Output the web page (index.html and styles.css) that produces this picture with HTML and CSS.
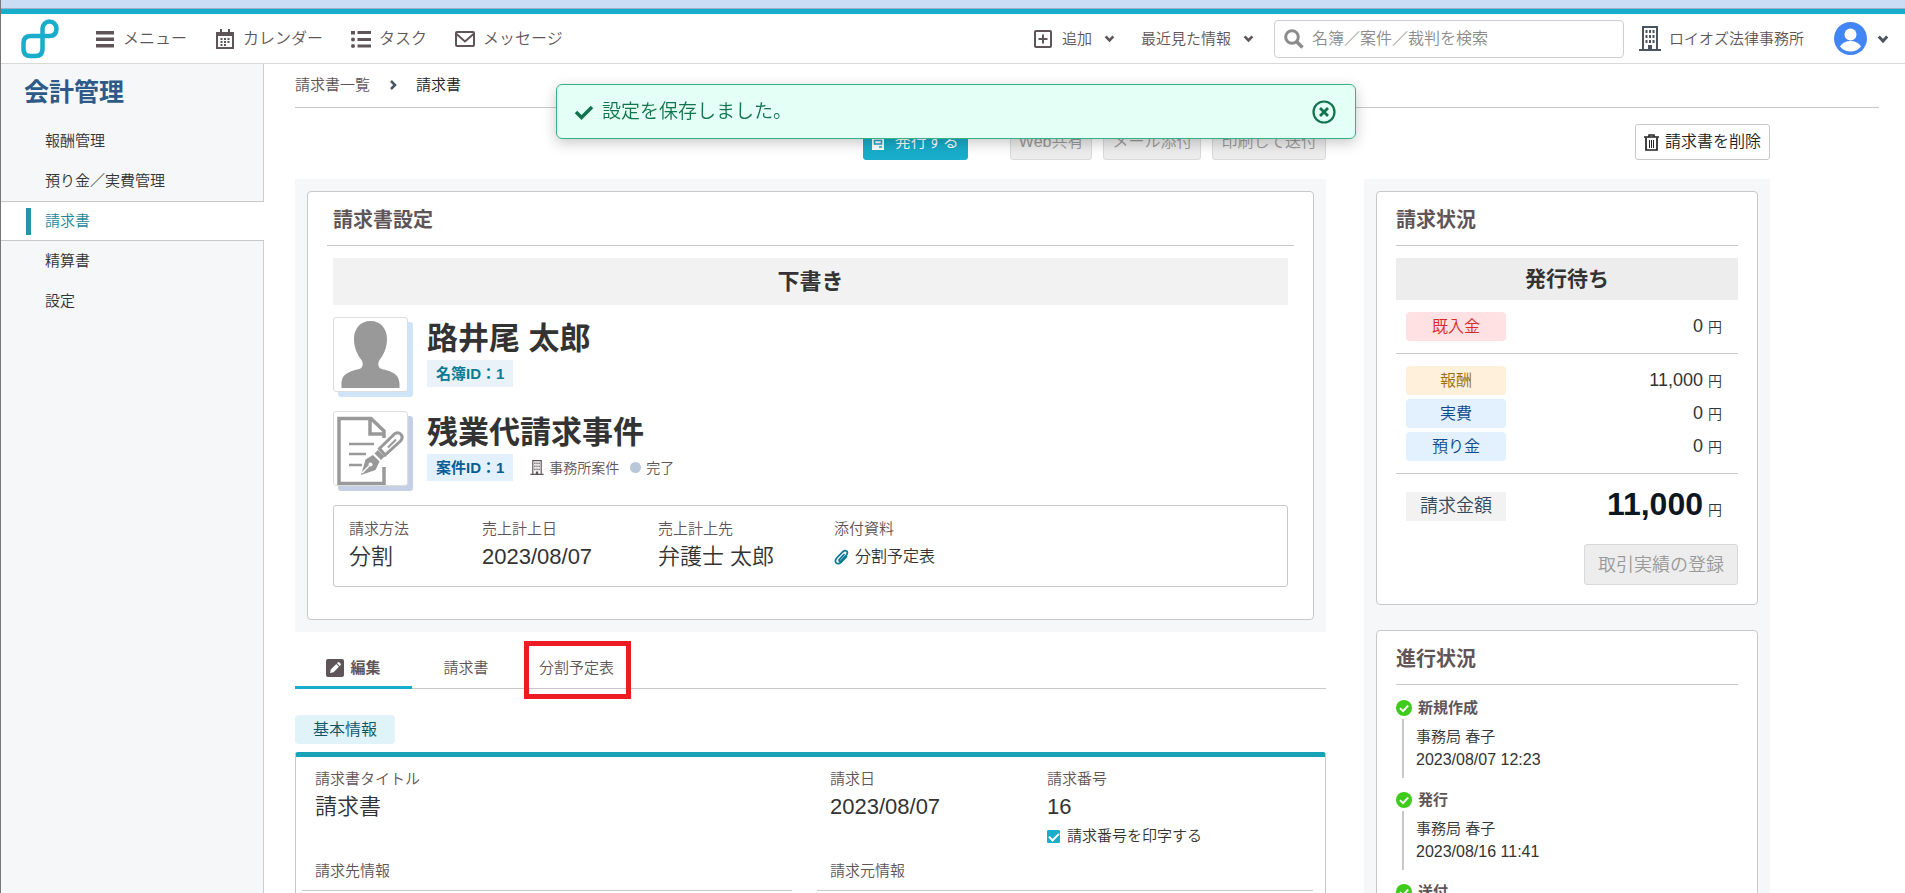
FILE: index.html
```html
<!DOCTYPE html>
<html lang="ja">
<head>
    <meta charset="UTF-8">
    <meta name="viewport" content="width=device-width, initial-scale=1.0">
    <title>請求書 | 会計管理</title>
    <link rel="stylesheet" href="styles.css">
</head>
<body>
    <!-- shared icons -->
    <svg class="defs" width="0" height="0">
        <symbol id="chevron" viewBox="0 0 10 8"><path d="M1.5 2l3.500 3.700 3.500-3.700" fill="none" stroke="currentColor" stroke-width="2.400"/></symbol>
        <symbol id="building" viewBox="0 0 22 25">
            <path d="M3 0h16v23h3v2H0v-2h3zM5 2v21h4v-4h4v4h4V2z" fill="currentColor" fill-rule="evenodd"/>
            <path d="M6.500 4h2v3h-2zM10 4h2v3h-2zM13.500 4h2v3h-2zM6.500 9h2v3h-2zM10 9h2v3h-2zM13.500 9h2v3h-2zM6.500 14h2v3h-2zM10 14h2v3h-2zM13.500 14h2v3h-2z" fill="currentColor"/>
        </symbol>
        <symbol id="done" viewBox="0 0 16 16"><circle cx="8" cy="8" r="8" fill="#3ecb1b"/><path d="M4 8.200l3 3 5.200-5.700" fill="none" stroke="#fff" stroke-width="1.900"/></symbol>
    </svg>

    <div class="page">
        <div class="strip"></div>
        <header class="header">
            <a class="logo" href="#" aria-label="ホーム">
                <svg width="38" height="40" viewBox="0 0 38 40"><path d="M21.500 30V9.500a7 7 0 0 1 14 0Q35.500 17 28 17H10Q2.500 17 2.500 24v6.500Q2.500 37 9.500 37h5Q21.500 37 21.500 30z" fill="none" stroke="#18adca" stroke-width="4.500"/></svg>
            </a>
            <nav class="main-nav">
                <a href="#"><svg width="20" height="20" viewBox="0 0 20 20"><path d="M1 2h18v3.500H1zM1 8.500h18V12H1zM1 15h18v3.500H1z" fill="currentColor"/></svg>メニュー</a>
                <a href="#"><svg width="20" height="20" viewBox="0 0 20 20"><path d="M2 4h16v15H2z" fill="none" stroke="currentColor" stroke-width="2"/><path d="M2 3h16v4H2zM5 0h2v4H5zM13 0h2v4h-2zM5.500 9h2v2h-2zM9 9h2v2H9zM12.500 9h2v2h-2zM5.500 12h2v2h-2zM9 12h2v2H9zM12.500 12h2v2h-2zM5.500 15h2v2h-2zM9 15h2v2H9z" fill="currentColor"/></svg>カレンダー</a>
                <a href="#"><svg width="20" height="20" viewBox="0 0 20 20"><path d="M0 2h4v3.500H0zM6.500 2H20v3H6.500zM6.500 9H20v3H6.500zM6.500 15.500H20v3H6.500z" fill="currentColor"/><circle cx="2" cy="10.500" r="2" fill="currentColor"/><circle cx="2" cy="17" r="2" fill="currentColor"/></svg>タスク</a>
                <a href="#"><svg width="20" height="20" viewBox="0 0 20 20"><rect x="1" y="3" width="18" height="14" rx="1" fill="none" stroke="currentColor" stroke-width="2"/><path d="M1.500 5l8.500 7.500L18.500 5" fill="none" stroke="currentColor" stroke-width="2"/></svg>メッセージ</a>
            </nav>
            <div class="tools">
                <button class="tool" type="button"><svg width="18" height="18" viewBox="0 0 18 18"><rect x="1" y="1" width="16" height="16" rx="1" fill="none" stroke="currentColor" stroke-width="2"/><path d="M9 4.500v9M4.500 9h9" stroke="currentColor" stroke-width="2"/></svg>追加<svg class="caret" width="11" height="9"><use href="#chevron"/></svg></button>
                <button class="tool recent" type="button">最近見た情報<svg class="caret" width="11" height="9"><use href="#chevron"/></svg></button>
                <label class="search">
                    <svg width="20" height="20" viewBox="0 0 20 20"><circle cx="8" cy="8" r="6.300" fill="none" stroke="#8c8c8c" stroke-width="3"/><path d="M12.500 12.500l6 6" stroke="#8c8c8c" stroke-width="3.500"/></svg>
                    <input type="search" placeholder="名簿／案件／裁判を検索" aria-label="検索">
                </label>
                <a class="office" href="#"><svg width="22" height="25"><use href="#building"/></svg>ロイオズ法律事務所</a>
                <button class="user" type="button" aria-label="アカウント">
                    <svg width="33" height="33" viewBox="0 0 33 33"><circle cx="16.500" cy="16.500" r="16.500" fill="#4285f4"/><circle cx="16.500" cy="12.500" r="6" fill="#fff"/><path d="M6 24.500q3.500-5.500 10.500-5.500T27 24.500Q23 29.500 16.500 29.500T6 24.500z" fill="#fff"/></svg>
                    <svg width="12" height="10"><use href="#chevron"/></svg>
                </button>
            </div>
        </header>

        <div class="body">
            <aside class="sidebar">
                <h1>会計管理</h1>
                <nav>
                    <a href="#">報酬管理</a>
                    <a href="#">預り金／実費管理</a>
                    <a class="active" href="#">請求書</a>
                    <a href="#">精算書</a>
                    <a href="#">設定</a>
                </nav>
            </aside>

            <main class="main">
                <div class="breadcrumb">
                    <a href="#">請求書一覧</a>
                    <svg width="8" height="10" viewBox="0 0 8 10"><path d="M2 1l4 4-4 4" fill="none" stroke="#4a545e" stroke-width="2.500"/></svg>
                    <span>請求書</span>
                </div>

                <div class="columns">
                    <div class="column">
                        <div class="actions">
                            <button class="btn issue" type="button"><svg width="12" height="16" viewBox="0 0 12 16"><path d="M0 0h12v16H0z" fill="#fff"/><path d="M2.500 6.500h7v3.500h-7z" fill="none" stroke="#18adca" stroke-width="1.500"/><path d="M7 13h3" stroke="#18adca" stroke-width="1.500"/></svg>発行する</button>
                            <button class="btn" type="button" disabled>Web共有</button>
                            <button class="btn" type="button" disabled>メール添付</button>
                            <button class="btn" type="button" disabled>印刷して送付</button>
                        </div>

                        <div class="panel">
                            <section class="card">
                                <h2>請求書設定</h2>
                                <div class="settings">
                                    <div class="status">下書き</div>
                                    <div class="entry">
                                        <div class="photo person">
                                            <svg width="73" height="73" viewBox="0 0 73 73"><path d="M36.500 3C26 3 20 11 20 21c0 9 3.500 16 7.500 21 2 3 1.500 7-1 8.500C19 53 7.500 54 7.500 66v4h58v-4c0-12-11.500-13-19-15.500-2.500-1.500-3-5.500-1-8.500 4-5 7.500-12 7.500-21C53 11 47 3 36.500 3z" fill="#999"/></svg>
                                        </div>
                                        <div>
                                            <div class="name">路井尾 太郎</div>
                                            <div class="meta"><span class="id-badge">名簿ID：1</span></div>
                                        </div>
                                    </div>
                                    <div class="entry">
                                        <div class="photo matter">
                                            <svg width="73" height="73" viewBox="0 0 73 73">
                                                <path d="M50 26V19L37 6.500H5v65h45V55M36 6v16h14" fill="none" stroke="#999" stroke-width="3.500"/>
                                                <path d="M15 32h25M15 42h17M15 53h13" stroke="#999" stroke-width="2.500"/>
                                                <path d="M45.500 36.500L61 21.500q4-2 6 1 2.500 3-.5 6.500L51 43z" fill="#fff" stroke="#999" stroke-width="3"/>
                                                <path d="M54 35.500l8-8" stroke="#999" stroke-width="2"/>
                                                <path d="M44 38l6.500 6.500-3.500 3.500-6.500-6.500z" fill="#999"/>
                                                <path d="M39 43l6.500 6.500-4 8.500-14.500 5 4.500-15.500z" fill="#999"/>
                                                <path d="M28 61l7-7" stroke="#fff" stroke-width="1.500"/><circle cx="36.500" cy="52.500" r="2" fill="#fff"/>
                                            </svg>
                                        </div>
                                        <div>
                                            <div class="name">残業代請求事件</div>
                                            <div class="meta">
                                                <span class="id-badge matter-id">案件ID：1</span>
                                                <svg width="14" height="15"><use href="#building"/></svg>
                                                <span>事務所案件</span>
                                                <i class="dot"></i>
                                                <span>完了</span>
                                            </div>
                                        </div>
                                    </div>
                                    <dl class="details">
                                        <div><dt>請求方法</dt><dd>分割</dd></div>
                                        <div><dt>売上計上日</dt><dd>2023/08/07</dd></div>
                                        <div><dt>売上計上先</dt><dd>弁護士 太郎</dd></div>
                                        <div><dt>添付資料</dt><dd><a class="file" href="#"><svg width="15" height="16" viewBox="0 0 15 16"><path d="M10.500 5L5.500 10.300q-1 1.500.2 2 .8.100 1.500-.6L12.500 6q1.700-2.200.2-3.800-1.800-1.500-3.800.4L2.700 9q-2.300 2.900-.6 4.900 2.200 1.900 4.900-.5l6-6.300" fill="none" stroke="#06788f" stroke-width="1.700"/></svg>分割予定表</a></dd></div>
                                    </dl>
                                </div>
                            </section>
                        </div>

                        <nav class="tabs">
                            <a class="current" href="#"><svg width="18" height="18" viewBox="0 0 18 18"><rect width="18" height="18" rx="2" fill="#5f5558"/><path d="M4 14l.8-3.500 5.500-5.500 2.700 2.700-5.500 5.500zM11 4.300l1-1q.7-.5 1.500.2l1 1q.7.8.2 1.500l-1 1z" fill="#fff"/></svg>編集</a>
                            <a href="#">請求書</a>
                            <a class="marked" href="#">分割予定表</a>
                        </nav>

                        <h3 class="section-label">基本情報</h3>
                        <section class="info">
                            <div>
                                <div class="field"><div class="label">請求書タイトル</div><div class="value">請求書</div></div>
                            </div>
                            <div class="pair">
                                <div class="field"><div class="label">請求日</div><div class="value">2023/08/07</div></div>
                                <div class="field">
                                    <div class="label">請求番号</div>
                                    <div class="value">16</div>
                                    <label class="check"><input type="checkbox" checked>請求番号を印字する</label>
                                </div>
                            </div>
                            <h4>請求先情報</h4>
                            <h4>請求元情報</h4>
                        </section>
                    </div>

                    <div class="column">
                        <div class="actions">
                            <button class="btn delete" type="button"><svg width="15" height="17" viewBox="0 0 15 17"><path d="M0 3h15M5 2.500V1h5v1.500" fill="none" stroke="currentColor" stroke-width="1.500"/><path d="M2 3.500V16h11V3.500" fill="none" stroke="currentColor" stroke-width="1.700"/><path d="M5.500 6v8M7.500 6v8M9.500 6v8" stroke="currentColor"/></svg>請求書を削除</button>
                        </div>

                        <div class="panel side">
                            <section class="card">
                                <h2>請求状況</h2>
                                <div class="status waiting">発行待ち</div>
                                <dl class="amounts">
                                    <div><dt class="paid">既入金</dt><dd>0<small>円</small></dd></div>
                                </dl>
                                <dl class="amounts">
                                    <div><dt class="fee">報酬</dt><dd>11,000<small>円</small></dd></div>
                                    <div><dt>実費</dt><dd>0<small>円</small></dd></div>
                                    <div><dt>預り金</dt><dd>0<small>円</small></dd></div>
                                </dl>
                                <dl class="amounts total">
                                    <div><dt>請求金額</dt><dd><strong>11,000</strong><small>円</small></dd></div>
                                </dl>
                                <button class="btn register" type="button" disabled>取引実績の登録</button>
                            </section>

                            <section class="card">
                                <h2>進行状況</h2>
                                <ol class="steps">
                                    <li>
                                        <h5><svg width="16" height="16"><use href="#done"/></svg>新規作成</h5>
                                        <p>事務局 春子<br><time>2023/08/07 12:23</time></p>
                                    </li>
                                    <li>
                                        <h5><svg width="16" height="16"><use href="#done"/></svg>発行</h5>
                                        <p>事務局 春子<br><time>2023/08/16 11:41</time></p>
                                    </li>
                                    <li>
                                        <h5><svg width="16" height="16"><use href="#done"/></svg>送付</h5>
                                    </li>
                                </ol>
                            </section>
                        </div>
                    </div>
                </div>
            </main>
        </div>

        <div class="toast" role="status">
            <svg width="20" height="15" viewBox="0 0 20 15"><path d="M2 7l5.500 5.500L18 2" fill="none" stroke="#12744f" stroke-width="3.500"/></svg>
            <span>設定を保存しました。</span>
            <button type="button" aria-label="閉じる"><svg width="24" height="24" viewBox="0 0 24 24"><circle cx="12" cy="12" r="10.500" fill="none" stroke="#12744f" stroke-width="2.200"/><path d="M8 8l8 8M16 8l-8 8" stroke="#12744f" stroke-width="2.800"/></svg></button>
        </div>
    </div>
</body>
</html>
```

FILE: styles.css
```css
* {
    box-sizing: border-box;
}
body {
    margin: 0;
    font-family: "Liberation Sans", "Noto Sans CJK JP", sans-serif;
    font-size: 15px;
    font-weight: 350;
    line-height: 22px;
    color: #333;
    background: #fff;
}
h1, h2, h3, h4, h5, p, dl, dd, ol {
    margin: 0;
    padding: 0;
}
a {
    color: inherit;
    text-decoration: none;
}
button, input {
    font: inherit;
    color: inherit;
}
svg {
    flex: none;
}
.defs {
    position: absolute;
}
.page {
    display: flex;
    flex-direction: column;
    height: 100vh;
    overflow: hidden;
    border-left: 1px solid #777;
}

/* header */
.strip {
    flex: none;
    height: 14px;
    background: #cbddf5;
    border-bottom: 5px solid #18adca;
    box-shadow: inset 0 -1px #9fb0cc;
}
.header {
    flex: none;
    display: flex;
    align-items: center;
    height: 50px;
    padding: 0 16px 0 20px;
    border-bottom: 1px solid #d9d9d9;
    color: #5f5558;
}
.logo {
    display: flex;
}
.main-nav {
    display: flex;
    gap: 28px;
    margin-left: 36px;
    font-size: 16px;
}
.main-nav a {
    display: flex;
    align-items: center;
    gap: 8px;
}
.tools {
    display: flex;
    align-items: center;
    margin-left: auto;
}
.tool, .user {
    display: flex;
    align-items: center;
    gap: 10px;
    padding: 0;
    border: 0;
    background: none;
    cursor: pointer;
}
.caret {
    margin-left: 2px;
}
.recent {
    margin: 0 20px 0 26px;
}
.search {
    display: flex;
    align-items: center;
    gap: 8px;
    width: 350px;
    height: 38px;
    padding: 0 9px;
    border: 1px solid #ccd0d6;
    border-radius: 4px;
}
.search input {
    flex: 1;
    min-width: 0;
    padding: 0;
    border: 0;
    outline: 0;
    background: none;
    font-size: 16px;
}
.search input::placeholder {
    color: #8c8c8c;
    opacity: 1;
}
.office {
    display: flex;
    align-items: center;
    gap: 8px;
    margin: 0 30px 0 15px;
}
.office svg, .user {
    color: #4a545e;
}

/* sidebar */
.body {
    display: flex;
    flex: 1;
    min-height: 0;
}
.sidebar {
    flex: none;
    width: 263px;
    background: #f6f7f9;
    border-right: 1px solid #d0d0d0;
}
.sidebar h1 {
    padding-left: 23px;
    margin-bottom: 1px;
    font-size: 25px;
    line-height: 56px;
    color: #2d5a88;
}
.sidebar a {
    display: flex;
    align-items: center;
    height: 40px;
    padding-left: 44px;
}
.sidebar .active {
    margin-right: -1px;
    padding-left: 25px;
    background: #fff;
    border: solid #c8c8c8;
    border-width: 1px 0;
    color: #24869a;
}
.sidebar .active::before {
    content: "";
    width: 5px;
    height: 27px;
    margin-right: 14px;
    background: #2494a8;
}

/* content */
.main {
    flex: 1;
    min-width: 0;
    padding: 0 26px 0 31px;
}
.breadcrumb {
    display: flex;
    align-items: center;
    gap: 19px;
    height: 44px;
    padding-bottom: 2px;
    border-bottom: 1px solid #c8c8c8;
    color: #222;
}
.breadcrumb a {
    color: #5f5558;
}
.columns {
    display: grid;
    grid-template-columns: minmax(0, 1fr) 406px;
    gap: 38px;
    padding-right: 109px;
}
.actions {
    display: flex;
    justify-content: flex-end;
    gap: 11px;
    margin: 16px 0 19px;
}
.btn {
    display: flex;
    align-items: center;
    justify-content: center;
    gap: 6px;
    height: 36px;
    padding: 0 8px;
    border: 1px solid #c8c8c8;
    border-radius: 3px;
    background: #fff;
    font-size: 16px;
    cursor: pointer;
}
.btn:disabled {
    background: #ededed;
    border-color: #d9d9d9;
    color: #999;
    cursor: default;
}
.issue {
    gap: 11px;
    margin-right: 31px;
    background: #18adca;
    border-color: #18adca;
    color: #fff;
}
.delete {
    color: #222;
}
.panel {
    padding: 12px;
    background: #f6f7f9;
}
.side {
    display: grid;
    gap: 25px;
}
.card {
    padding: 0 19px 19px;
    background: #fff;
    border: 1px solid #c8c8c8;
    border-radius: 4px;
}
.card h2 {
    padding: 3px 6px 0;
    border-bottom: 1px solid #c8c8c8;
    font-size: 20px;
    line-height: 50px;
    color: #5f5558;
}
.side h2 {
    margin-bottom: 12px;
    padding: 3px 0 0;
}
.settings {
    padding: 12px 6px;
}
.status {
    background: #f2f2f2;
    font-size: 22px;
    font-weight: bold;
    line-height: 47px;
    text-align: center;
}
.waiting {
    background: #ededed;
    font-size: 21px;
    line-height: 42px;
}
.entry {
    display: flex;
    gap: 19px;
    margin-top: 12px;
}
.entry + .entry, .details {
    margin-top: 19px;
}
.photo {
    width: 75px;
    height: 75px;
    border: 1px solid #ddd;
    border-radius: 3px;
    background: #fff;
}
.person {
    box-shadow: 5px 5px #cfe4f7;
}
.matter {
    box-shadow: 5px 5px #c6d0e4;
}
.name {
    padding-top: 1px;
    font-size: 31px;
    font-weight: bold;
    line-height: 42px;
}
.meta {
    display: flex;
    align-items: center;
    gap: 5px;
    font-size: 14px;
    color: #5f5558;
}
.id-badge {
    margin-right: 12px;
    padding: 0 9px;
    background: #e8f2f8;
    font-size: 15px;
    font-weight: bold;
    line-height: 27px;
    color: #0b7a94;
}
.matter-id {
    background: #e2f1fd;
    color: #0a5c94;
}
.dot {
    width: 11px;
    height: 11px;
    margin-left: 6px;
    border-radius: 50%;
    background: #b8c8d8;
}
.details {
    display: grid;
    grid-template-columns: 133px 176px 176px 1fr;
    padding: 12px 15px 14px;
    border: 1px solid #c8c8c8;
    border-radius: 3px;
}
.settings {
    padding-bottom: 13px;
}
.details dt, .label {
    color: #5f5558;
}
.details dd, .value {
    margin-top: 2px;
    font-size: 22px;
    line-height: 30px;
}
.details .file {
    display: flex;
    align-items: center;
    gap: 6px;
    font-size: 16px;
}

/* tabs */
.tabs {
    display: flex;
    padding-top: 16px;
    border-bottom: 1px solid #c8c8c8;
}
.tabs a {
    position: relative;
    display: flex;
    align-items: center;
    justify-content: center;
    gap: 6px;
    min-width: 108px;
    height: 40px;
    padding: 0 19px;
    color: #5f5558;
}
.tabs .current {
    min-width: 117px;
    font-weight: bold;
}
.tabs .current::after {
    content: "";
    position: absolute;
    left: 0;
    right: 0;
    bottom: -1px;
    height: 3px;
    background: #18adca;
}
/* red frame laid over the tab */
.marked::after {
    content: "";
    position: absolute;
    inset: -7px 2px -11px 4px;
    border: 5px solid #ed1c24;
}

/* basic information */
.section-label {
    width: fit-content;
    margin: 26px 0 8px;
    padding: 0 18px;
    background: #e0f3f8;
    border-radius: 4px;
    font-size: 16px;
    font-weight: inherit;
    line-height: 29px;
    color: #0b5566;
}
.info {
    display: grid;
    grid-template-columns: 490fr 496fr;
    column-gap: 25px;
    padding: 11px 12px 20px 6px;
    border: 1px solid #c8c8c8;
    border-top: 5px solid #17a2b8;
    border-radius: 3px;
}
.field {
    padding-left: 13px;
}
.pair {
    display: grid;
    grid-template-columns: 217px 1fr;
}
.check {
    display: flex;
    align-items: center;
    gap: 7px;
    margin-top: 3px;
}
.check input {
    appearance: none;
    display: flex;
    justify-content: center;
    width: 13px;
    height: 13px;
    margin: 0;
    border: 1px solid #18adca;
    border-radius: 1px;
}
.check input:checked {
    background: #18adca;
}
.check input:checked::before {
    content: "";
    width: 4px;
    height: 8px;
    border: solid #fff;
    border-width: 0 2px 2px 0;
    transform: rotate(45deg);
}
.info h4 {
    margin-top: 13px;
    padding: 0 13px 8px;
    border-bottom: 1px solid #c8c8c8;
    font-weight: inherit;
    color: #5f5558;
}

/* billing status */
.amounts {
    display: grid;
    gap: 4px;
    padding: 12px 16px 12px 10px;
    border-bottom: 1px solid #c8c8c8;
}
.amounts div {
    display: flex;
    align-items: center;
    justify-content: space-between;
}
.amounts dt {
    width: 100px;
    border-radius: 4px;
    background: #e2f1fd;
    font-size: 16px;
    line-height: 29px;
    text-align: center;
    color: #0a4a8c;
}
.amounts .paid {
    background: #ffe1e3;
    color: #dc2a2a;
}
.amounts .fee {
    background: #fff0dc;
    color: #9a6f0c;
}
.amounts dd {
    display: flex;
    align-items: baseline;
    gap: 5px;
    font-size: 18px;
}
.amounts small {
    font-size: 14px;
}
.total {
    padding-top: 18px;
    padding-bottom: 23px;
    border-bottom: 0;
}
.total dt {
    border-radius: 0;
    background: #f2f2f2;
    font-size: 18px;
    color: #34495e;
}
.total strong {
    font-size: 32px;
    font-weight: bold;
    color: #0d1722;
}
.register {
    height: 41px;
    margin-left: auto;
    padding: 0 13px;
    font-size: 18px;
}

/* progress */
.steps {
    list-style: none;
}
.steps li {
    margin-bottom: 11px;
}
.steps h5 {
    display: flex;
    align-items: center;
    gap: 6px;
    font-size: 15px;
    color: #5f5558;
}
.steps p {
    margin-left: 6px;
    padding: 6px 0 7px 12px;
    border-left: 2px solid #c8c8c8;
    line-height: 23px;
}
.steps time {
    font-size: 16px;
}

/* saved message over the page */
.toast {
    position: fixed;
    top: 84px;
    left: 556px;
    display: flex;
    align-items: center;
    gap: 8px;
    width: 800px;
    height: 55px;
    padding: 1px 19px 0 17px;
    border: 1px solid #35b184;
    border-radius: 6px;
    background: #e3fff6;
    box-shadow: 0 4px 14px rgba(0, 0, 0, 0.22);
    font-size: 19px;
    color: #12744f;
}
.toast button {
    display: flex;
    margin-left: auto;
    padding: 0;
    border: 0;
    background: none;
    cursor: pointer;
}
```
